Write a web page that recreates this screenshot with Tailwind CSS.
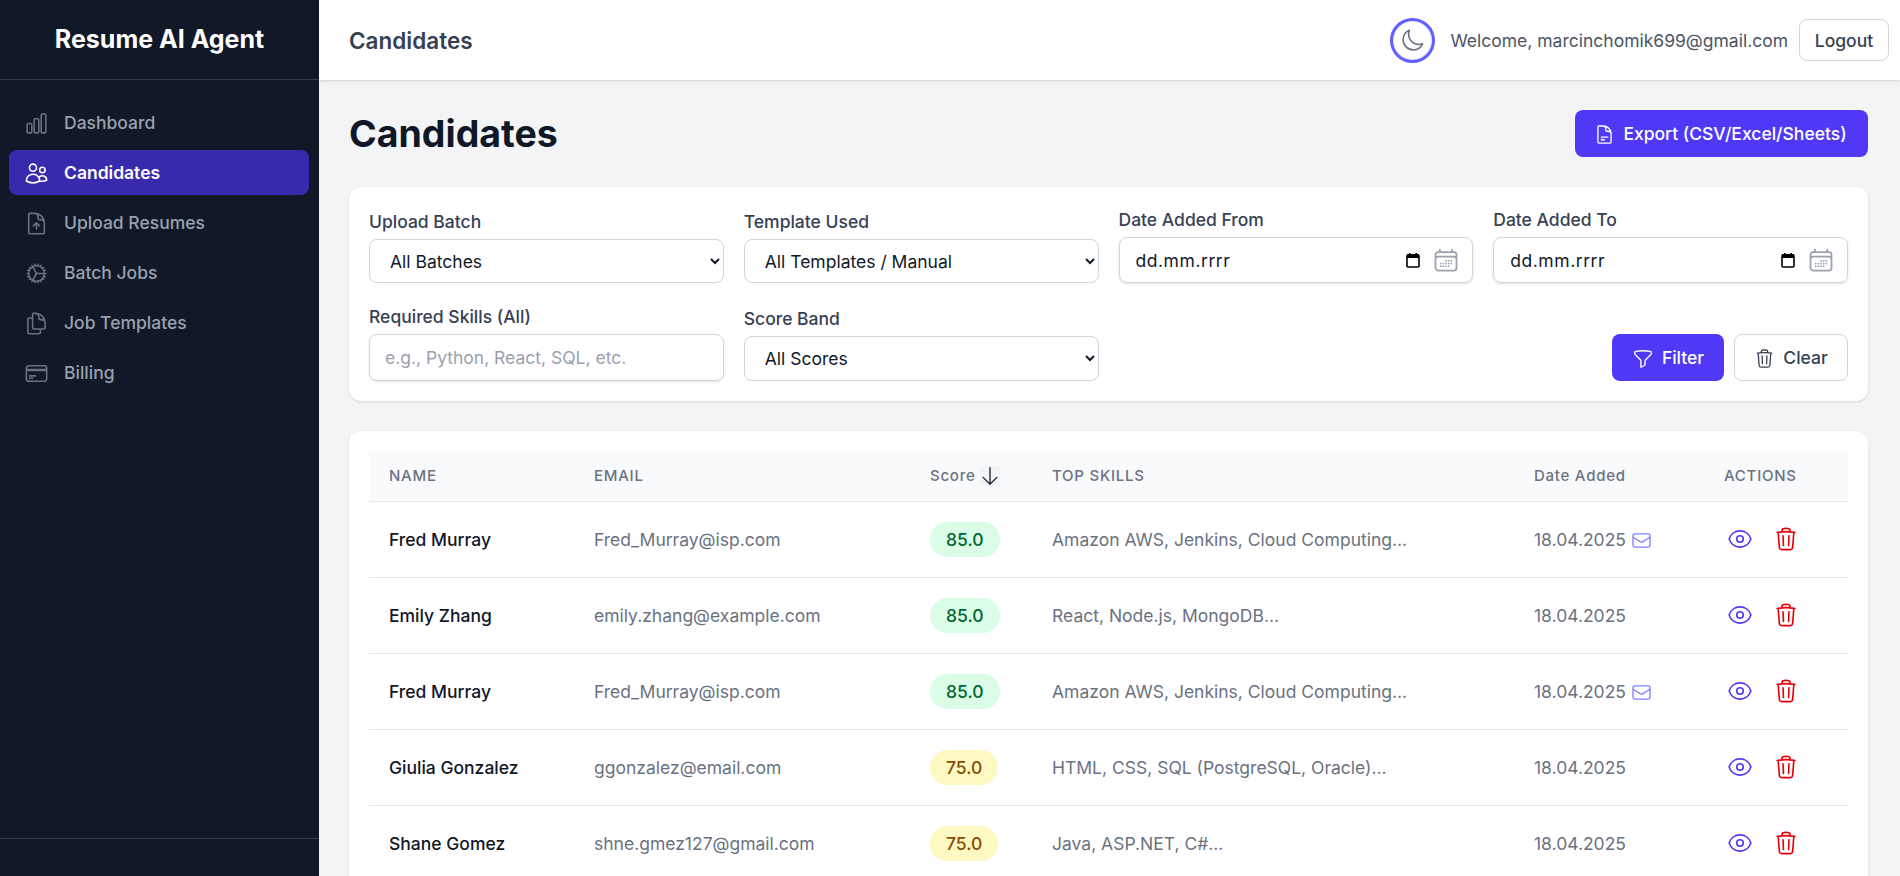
<!DOCTYPE html>
<html lang="en">
<head>
  <meta charset="UTF-8" />
  <title>Candidates</title>
  <script src="https://cdn.jsdelivr.net/npm/@tailwindcss/browser@4"></script>
</head>
<body class="h-screen overflow-hidden flex bg-gray-100 font-[Inter,sans-serif]">
  <!-- sidebar -->
  <aside class="w-[319px] shrink-0 h-full bg-[#111827] flex flex-col">
    <div class="h-[80px] shrink-0 flex items-center justify-center border-b border-gray-700">
      <span class="text-[25px] font-bold text-white">Resume AI Agent</span>
    </div>
    <nav class="flex-1 pl-[9px] pr-[10px] pt-[20px] flex flex-col gap-[5px]">
      <a class="h-[45px] pt-[2px] flex items-center gap-[15px] pl-[15px] rounded-lg text-[17.5px] font-medium text-gray-400">
        <svg class="w-[25px] h-[25px] text-gray-500" fill="none" viewBox="0 0 24 24" stroke-width="1.5" stroke="currentColor"><path stroke-linecap="round" stroke-linejoin="round" d="M3 13.125C3 12.504 3.504 12 4.125 12h2.25c.621 0 1.125.504 1.125 1.125v6.75C7.5 20.496 6.996 21 6.375 21h-2.25A1.125 1.125 0 0 1 3 19.875v-6.75ZM9.75 8.625c0-.621.504-1.125 1.125-1.125h2.25c.621 0 1.125.504 1.125 1.125v11.25c0 .621-.504 1.125-1.125 1.125h-2.25a1.125 1.125 0 0 1-1.125-1.125V8.625ZM16.5 4.125c0-.621.504-1.125 1.125-1.125h2.25C20.496 3 21 3.504 21 4.125v15.75c0 .621-.504 1.125-1.125 1.125h-2.25a1.125 1.125 0 0 1-1.125-1.125V4.125Z"/></svg>
        Dashboard
      </a>
      <a class="h-[45px] pt-[2px] flex items-center gap-[15px] pl-[15px] rounded-lg text-[17.5px] font-semibold text-white bg-indigo-800">
        <svg class="w-[25px] h-[25px] text-white" fill="none" viewBox="0 0 24 24" stroke-width="1.5" stroke="currentColor"><path stroke-linecap="round" stroke-linejoin="round" d="M15 19.128a9.38 9.38 0 0 0 2.625.372 9.337 9.337 0 0 0 4.121-.952 4.125 4.125 0 0 0-7.533-2.493M15 19.128v-.003c0-1.113-.285-2.16-.786-3.07M15 19.128v.106A12.318 12.318 0 0 1 8.624 21c-2.331 0-4.512-.645-6.374-1.766l-.001-.109a6.375 6.375 0 0 1 11.964-3.07M12 6.375a3.375 3.375 0 1 1-6.75 0 3.375 3.375 0 0 1 6.75 0Zm8.25 2.25a2.625 2.625 0 1 1-5.25 0 2.625 2.625 0 0 1 5.25 0Z"/></svg>
        Candidates
      </a>
      <a class="h-[45px] pt-[2px] flex items-center gap-[15px] pl-[15px] rounded-lg text-[17.5px] font-medium text-gray-400">
        <svg class="w-[25px] h-[25px] text-gray-500" fill="none" viewBox="0 0 24 24" stroke-width="1.5" stroke="currentColor"><path stroke-linecap="round" stroke-linejoin="round" d="M19.5 14.25v-2.625a3.375 3.375 0 0 0-3.375-3.375h-1.5A1.125 1.125 0 0 1 13.5 7.125v-1.5a3.375 3.375 0 0 0-3.375-3.375H8.25m6.75 12-3-3m0 0-3 3m3-3v6m-1.5-15H5.625c-.621 0-1.125.504-1.125 1.125v17.25c0 .621.504 1.125 1.125 1.125h12.75c.621 0 1.125-.504 1.125-1.125V11.25a9 9 0 0 0-9-9Z"/></svg>
        Upload Resumes
      </a>
      <a class="h-[45px] pt-[2px] flex items-center gap-[15px] pl-[15px] rounded-lg text-[17.5px] font-medium text-gray-400">
        <svg class="w-[25px] h-[25px] text-gray-500" fill="none" viewBox="0 0 24 24" stroke-width="1.5" stroke="currentColor"><path stroke-linecap="round" stroke-linejoin="round" d="M4.5 12a7.5 7.5 0 0 0 15 0m-15 0a7.5 7.5 0 1 1 15 0m-15 0H3m16.5 0H21m-1.5 0H12m-8.457 3.077 1.41-.513m14.095-5.13 1.41-.513M5.106 17.785l1.15-.964m11.49-9.642 1.149-.964M7.501 19.795l.75-1.3m7.5-12.99.75-1.3m-6.063 16.658.26-1.477m2.605-14.772.26-1.477m0 17.726-.26-1.477M10.698 4.614l-.26-1.477M16.5 19.794l-.75-1.299M7.5 4.205 12 12m6.894 5.785-1.149-.964M6.256 7.178l-1.15-.964m15.352 8.864-1.41-.513M4.954 9.435l-1.41-.514M12.002 12l-3.75 6.495"/></svg>
        Batch Jobs
      </a>
      <a class="h-[45px] pt-[2px] flex items-center gap-[15px] pl-[15px] rounded-lg text-[17.5px] font-medium text-gray-400">
        <svg class="w-[25px] h-[25px] text-gray-500" fill="none" viewBox="0 0 24 24" stroke-width="1.5" stroke="currentColor"><path stroke-linecap="round" stroke-linejoin="round" d="M15.75 17.25v3.375c0 .621-.504 1.125-1.125 1.125h-9.75a1.125 1.125 0 0 1-1.125-1.125V7.875c0-.621.504-1.125 1.125-1.125H6.75a9.06 9.06 0 0 1 1.5.124m7.5 10.376h3.375c.621 0 1.125-.504 1.125-1.125V11.25c0-4.46-3.243-8.161-7.5-8.876a9.06 9.06 0 0 0-1.5-.124H9.375c-.621 0-1.125.504-1.125 1.125v3.5m7.5 10.375H9.375a1.125 1.125 0 0 1-1.125-1.125v-9.25m12 6.625v-1.875a3.375 3.375 0 0 0-3.375-3.375h-1.5a1.125 1.125 0 0 1-1.125-1.125v-1.5a3.375 3.375 0 0 0-3.375-3.375H9.75"/></svg>
        Job Templates
      </a>
      <a class="h-[45px] pt-[2px] flex items-center gap-[15px] pl-[15px] rounded-lg text-[17.5px] font-medium text-gray-400">
        <svg class="w-[25px] h-[25px] text-gray-500" fill="none" viewBox="0 0 24 24" stroke-width="1.5" stroke="currentColor"><path stroke-linecap="round" stroke-linejoin="round" d="M2.25 8.25h19.5M2.25 9h19.5m-16.5 5.25h6m-6 2.25h3m-3.75 3h15a2.25 2.25 0 0 0 2.25-2.25V6.75A2.25 2.25 0 0 0 19.5 4.5h-15a2.25 2.25 0 0 0-2.25 2.25v10.5A2.25 2.25 0 0 0 4.5 19.5Z"/></svg>
        Billing
      </a>
    </nav>
    <div class="h-[38px] shrink-0 border-t border-gray-700"></div>
  </aside>

  <div class="flex-1 min-w-0 flex flex-col h-full">
    <!-- header -->
    <header class="h-[80px] shrink-0 bg-white shadow flex items-center justify-between pl-[30px] pr-[11px] relative">
      <h2 class="text-[22.5px] pt-[2px] font-semibold text-gray-700">Candidates</h2>
      <div class="flex items-center">
        <button class="w-[45px] h-[45px] rounded-full border-[3px] border-indigo-500 ring-1 ring-inset ring-indigo-100 flex items-center justify-center text-gray-500 mr-[15px]">
          <svg class="w-[25px] h-[25px]" fill="none" viewBox="0 0 24 24" stroke-width="1.5" stroke="currentColor"><path stroke-linecap="round" stroke-linejoin="round" d="M21.752 15.002A9.72 9.72 0 0 1 18 15.75c-5.385 0-9.75-4.365-9.75-9.75 0-1.33.266-2.597.748-3.752A9.753 9.753 0 0 0 3 11.25C3 16.635 7.365 21 12.75 21a9.753 9.753 0 0 0 9.002-5.998Z"/></svg>
        </button>
        <span class="text-[17.5px] pt-[2px] text-gray-600 mr-[11px]">Welcome, marcinchomik699@gmail.com</span>
        <button class="w-[90px] h-[42px] pt-[2px] rounded-lg border border-gray-300 bg-white text-[17.5px] font-medium text-gray-700">Logout</button>
      </div>
    </header>

    <main class="flex-1 min-h-0 overflow-hidden pl-[30px] pr-[32px]">
      <div class="h-[107px] flex items-center justify-between">
        <h1 class="text-[37.5px] pt-[2px] font-bold text-gray-900">Candidates</h1>
        <button class="w-[293px] h-[47px] pt-[2px] pr-[2px] rounded-lg bg-indigo-600 text-white text-[17.5px] font-medium flex items-center justify-center gap-2">
          <svg class="w-[21px] h-[21px]" fill="none" viewBox="0 0 24 24" stroke-width="1.5" stroke="currentColor"><path stroke-linecap="round" stroke-linejoin="round" d="M19.5 14.25v-2.625a3.375 3.375 0 0 0-3.375-3.375h-1.5A1.125 1.125 0 0 1 13.5 7.125v-1.5a3.375 3.375 0 0 0-3.375-3.375H8.25m0 12.75h7.5m-7.5 3H12M10.5 2.25H5.625c-.621 0-1.125.504-1.125 1.125v17.25c0 .621.504 1.125 1.125 1.125h12.75c.621 0 1.125-.504 1.125-1.125V11.25a9 9 0 0 0-9-9Z"/></svg>
          Export (CSV/Excel/Sheets)
        </button>
      </div>

      <!-- filters -->
      <section class="h-[214px] bg-white rounded-xl shadow p-5 grid grid-cols-4 gap-x-5 gap-y-5 grid-rows-[76px_78px] items-end">
        <div>
          <label class="block text-[17.5px] font-medium text-gray-700 mb-[5px] leading-6">Upload Batch</label>
          <select class="w-full h-[44px] rounded-lg border border-gray-300 bg-white pl-[16px] text-[17.5px] text-gray-900"><option>All Batches</option></select>
        </div>
        <div>
          <label class="block text-[17.5px] font-medium text-gray-700 mb-[5px] leading-6">Template Used</label>
          <select class="w-full h-[44px] rounded-lg border border-gray-300 bg-white pl-[16px] text-[17.5px] text-gray-900"><option>All Templates / Manual</option></select>
        </div>
        <div>
          <label class="block text-[17.5px] font-medium text-gray-700 mb-[5px] leading-6">Date Added From</label>
          <div class="h-[46px] rounded-lg border border-gray-300 shadow-sm flex items-center pl-4 pr-[12px] text-[17.5px] tracking-[0.55px] text-gray-900">
            <span class="flex-1 pt-[2px]">dd.mm.rrrr</span>
            <svg class="w-4 h-4 mr-[11px]" viewBox="0 0 16 16"><rect x="2" y="3" width="12" height="12" rx="1" fill="none" stroke="#000" stroke-width="1.6"/><rect x="2" y="2" width="12" height="4" fill="#000"/><rect x="4" y="1" width="1.5" height="2" fill="#000"/><rect x="10.5" y="1" width="1.5" height="2" fill="#000"/></svg>
            <svg class="w-7 h-7 text-gray-400" fill="none" viewBox="0 0 24 24" stroke-width="1.5" stroke="currentColor"><path stroke-linecap="round" stroke-linejoin="round" d="M6.75 3v2.25M17.25 3v2.25M3 18.75V7.5a2.25 2.25 0 0 1 2.25-2.25h13.5A2.25 2.25 0 0 1 21 7.5v11.25m-18 0A2.25 2.25 0 0 0 5.25 21h13.5A2.25 2.25 0 0 0 21 18.75m-18 0v-7.5A2.25 2.25 0 0 1 5.25 9h13.5A2.25 2.25 0 0 1 21 11.25v7.5m-9-6h.008v.008H12v-.008ZM12 15h.008v.008H12V15Zm0 2.25h.008v.008H12v-.008ZM9.75 15h.008v.008H9.75V15Zm0 2.25h.008v.008H9.75v-.008ZM7.5 15h.008v.008H7.5V15Zm0 2.25h.008v.008H7.5v-.008Zm6.75-4.5h.008v.008h-.008v-.008Zm0 2.25h.008v.008h-.008V15Zm0 2.25h.008v.008h-.008v-.008Zm2.25-4.5h.008v.008H16.5v-.008Zm0 2.25h.008v.008H16.5V15Z"/></svg>
          </div>
        </div>
        <div>
          <label class="block text-[17.5px] font-medium text-gray-700 mb-[5px] leading-6">Date Added To</label>
          <div class="h-[46px] rounded-lg border border-gray-300 shadow-sm flex items-center pl-4 pr-[12px] text-[17.5px] tracking-[0.55px] text-gray-900">
            <span class="flex-1 pt-[2px]">dd.mm.rrrr</span>
            <svg class="w-4 h-4 mr-[11px]" viewBox="0 0 16 16"><rect x="2" y="3" width="12" height="12" rx="1" fill="none" stroke="#000" stroke-width="1.6"/><rect x="2" y="2" width="12" height="4" fill="#000"/><rect x="4" y="1" width="1.5" height="2" fill="#000"/><rect x="10.5" y="1" width="1.5" height="2" fill="#000"/></svg>
            <svg class="w-7 h-7 text-gray-400" fill="none" viewBox="0 0 24 24" stroke-width="1.5" stroke="currentColor"><path stroke-linecap="round" stroke-linejoin="round" d="M6.75 3v2.25M17.25 3v2.25M3 18.75V7.5a2.25 2.25 0 0 1 2.25-2.25h13.5A2.25 2.25 0 0 1 21 7.5v11.25m-18 0A2.25 2.25 0 0 0 5.25 21h13.5A2.25 2.25 0 0 0 21 18.75m-18 0v-7.5A2.25 2.25 0 0 1 5.25 9h13.5A2.25 2.25 0 0 1 21 11.25v7.5m-9-6h.008v.008H12v-.008ZM12 15h.008v.008H12V15Zm0 2.25h.008v.008H12v-.008ZM9.75 15h.008v.008H9.75V15Zm0 2.25h.008v.008H9.75v-.008ZM7.5 15h.008v.008H7.5V15Zm0 2.25h.008v.008H7.5v-.008Zm6.75-4.5h.008v.008h-.008v-.008Zm0 2.25h.008v.008h-.008V15Zm0 2.25h.008v.008h-.008v-.008Zm2.25-4.5h.008v.008H16.5v-.008Zm0 2.25h.008v.008H16.5V15Z"/></svg>
          </div>
        </div>
        <div>
          <label class="block text-[17.5px] font-medium text-gray-700 mb-[5px] leading-6">Required Skills (All)</label>
          <input type="text" placeholder="e.g., Python, React, SQL, etc." class="w-full h-[47px] rounded-lg border border-gray-300 shadow-sm pl-[15px] pr-4 text-[17.5px] placeholder:text-gray-400" />
        </div>
        <div>
          <label class="block text-[17.5px] font-medium text-gray-700 mb-[5px] leading-6">Score Band</label>
          <select class="w-full h-[45px] rounded-lg border border-gray-300 bg-white pl-[16px] text-[17.5px] text-gray-900"><option>All Scores</option></select>
        </div>
        <div class="col-span-2 flex justify-end gap-[10px]">
          <button class="w-[112px] h-[47px] pt-[2px] rounded-lg bg-indigo-600 text-white text-[17.5px] font-medium flex items-center justify-center gap-2">
            <svg class="w-[22px] h-[22px]" fill="none" viewBox="0 0 24 24" stroke-width="1.5" stroke="currentColor"><path stroke-linecap="round" stroke-linejoin="round" d="M12 3c2.755 0 5.455.232 8.083.678.533.09.917.556.917 1.096v1.044a2.25 2.25 0 0 1-.659 1.591l-5.432 5.432a2.25 2.25 0 0 0-.659 1.591v2.927a2.25 2.25 0 0 1-1.244 2.013L9.75 21v-6.568a2.25 2.25 0 0 0-.659-1.591L3.659 7.409A2.25 2.25 0 0 1 3 5.818V4.774c0-.54.384-1.006.917-1.096A48.32 48.32 0 0 1 12 3Z"/></svg>
            Filter
          </button>
          <button class="w-[114px] h-[47px] pt-[2px] rounded-lg border border-gray-300 bg-white text-gray-700 text-[17.5px] font-medium flex items-center justify-center gap-2">
            <svg class="w-[21px] h-[21px]" fill="none" viewBox="0 0 24 24" stroke-width="1.5" stroke="currentColor"><path stroke-linecap="round" stroke-linejoin="round" d="m14.74 9-.346 9m-4.788 0L9.26 9m9.968-3.21c.342.052.682.107 1.022.166m-1.022-.165L18.16 19.673a2.25 2.25 0 0 1-2.244 2.077H8.084a2.25 2.25 0 0 1-2.244-2.077L4.772 5.79m14.456 0a48.108 48.108 0 0 0-3.478-.397m-12 .562c.34-.059.68-.114 1.022-.165m0 0a48.11 48.11 0 0 1 3.478-.397m7.5 0v-.916c0-1.18-.91-2.164-2.09-2.201a51.964 51.964 0 0 0-3.32 0c-1.18.037-2.09 1.022-2.09 2.201v.916m7.5 0a48.667 48.667 0 0 0-7.5 0"/></svg>
            Clear
          </button>
        </div>
      </section>

      <!-- table -->
      <section class="mt-[30px] bg-white rounded-xl shadow p-5">
        <table class="w-full table-fixed">
          <colgroup>
            <col class="w-[205px]" /><col class="w-[336px]" /><col class="w-[122px]" /><col class="w-[482px]" /><col class="w-[190px]" /><col class="w-[144px]" />
          </colgroup>
          <thead class="bg-gray-50 border-b border-gray-200">
            <tr class="h-[50px] text-left text-[15px] text-gray-500 tracking-wider">
              <th class="px-5 font-medium uppercase">Name</th>
              <th class="px-5 font-medium uppercase">Email</th>
              <th class="px-5 font-medium">
                <span class="flex items-center gap-[5px]">Score
                  <span class="w-5 h-5 rounded bg-gray-100 flex items-center justify-center text-gray-800">
                    <svg class="w-[22px] h-[22px] shrink-0" fill="none" viewBox="0 0 24 24" stroke-width="1.5" stroke="currentColor"><path stroke-linecap="round" stroke-linejoin="round" d="M19.5 13.5 12 21m0 0-7.5-7.5M12 21V3"/></svg>
                  </span>
                </span>
              </th>
              <th class="px-5 font-medium uppercase">Top Skills</th>
              <th class="px-5 font-medium">Date Added</th>
              <th class="px-5 font-medium uppercase">Actions</th>
            </tr>
          </thead>
          <tbody id="rows"></tbody>
        </table>
      </section>
    </main>
  </div>

  <script>
    const candidates = [
      { name: 'Fred Murray', email: 'Fred_Murray@isp.com', score: '85.0', skills: 'Amazon AWS, Jenkins, Cloud Computing...', mail: true },
      { name: 'Emily Zhang', email: 'emily.zhang@example.com', score: '85.0', skills: 'React, Node.js, MongoDB...', mail: false },
      { name: 'Fred Murray', email: 'Fred_Murray@isp.com', score: '85.0', skills: 'Amazon AWS, Jenkins, Cloud Computing...', mail: true },
      { name: 'Giulia Gonzalez', email: 'ggonzalez@email.com', score: '75.0', skills: 'HTML, CSS, SQL (PostgreSQL, Oracle)...', mail: false },
      { name: 'Shane Gomez', email: 'shne.gmez127@gmail.com', score: '75.0', skills: 'Java, ASP.NET, C#...', mail: false }
    ];

    const mailIcon = `<svg class="w-[21px] h-[21px] text-indigo-500/80" fill="none" viewBox="0 0 24 24" stroke-width="1.5" stroke="currentColor"><path stroke-linecap="round" stroke-linejoin="round" d="M21.75 6.75v10.5a2.25 2.25 0 0 1-2.25 2.25h-15a2.25 2.25 0 0 1-2.25-2.25V6.75m19.5 0A2.25 2.25 0 0 0 19.5 4.5h-15a2.25 2.25 0 0 0-2.25 2.25m19.5 0v.243a2.25 2.25 0 0 1-1.07 1.916l-7.5 4.615a2.25 2.25 0 0 1-2.36 0L3.32 8.91a2.25 2.25 0 0 1-1.07-1.916V6.75"/></svg>`;

    document.getElementById('rows').innerHTML = candidates.map(c => {
      const badge = c.score === '85.0' ? 'bg-green-100 text-green-800' : 'bg-yellow-100 text-yellow-800';
      return `
        <tr class="h-[76px] border-b border-gray-200 text-[17.5px]">
          <td class="px-5 pt-[2px] font-medium text-gray-900">${c.name}</td>
          <td class="px-5 pt-[2px] text-gray-500">${c.email}</td>
          <td class="px-5"><span class="inline-block h-[35px] leading-[36px] px-4 rounded-full font-medium ${badge}">${c.score}</span></td>
          <td class="px-5 pt-[2px] text-gray-500">${c.skills}</td>
          <td class="px-5 pt-[2px] text-gray-500"><span class="flex items-center gap-[5px]">18.04.2025 ${c.mail ? mailIcon : ''}</span></td>
          <td class="px-5">
            <span class="flex items-center gap-[20px] pl-[3px]">
              <svg class="w-[26px] h-[26px] text-indigo-600" fill="none" viewBox="0 0 24 24" stroke-width="1.5" stroke="currentColor"><path stroke-linecap="round" stroke-linejoin="round" d="M2.036 12.322a1.012 1.012 0 0 1 0-.639C3.423 7.51 7.36 4.5 12 4.5c4.638 0 8.573 3.007 9.963 7.178.07.207.07.431 0 .639C20.577 16.49 16.64 19.5 12 19.5c-4.638 0-8.573-3.007-9.963-7.178Z"/><path stroke-linecap="round" stroke-linejoin="round" d="M15 12a3 3 0 1 1-6 0 3 3 0 0 1 6 0Z"/></svg>
              <svg class="w-[26px] h-[26px] text-red-600" fill="none" viewBox="0 0 24 24" stroke-width="1.5" stroke="currentColor"><path stroke-linecap="round" stroke-linejoin="round" d="m14.74 9-.346 9m-4.788 0L9.26 9m9.968-3.21c.342.052.682.107 1.022.166m-1.022-.165L18.16 19.673a2.25 2.25 0 0 1-2.244 2.077H8.084a2.25 2.25 0 0 1-2.244-2.077L4.772 5.79m14.456 0a48.108 48.108 0 0 0-3.478-.397m-12 .562c.34-.059.68-.114 1.022-.165m0 0a48.11 48.11 0 0 1 3.478-.397m7.5 0v-.916c0-1.18-.91-2.164-2.09-2.201a51.964 51.964 0 0 0-3.32 0c-1.18.037-2.09 1.022-2.09 2.201v.916m7.5 0a48.667 48.667 0 0 0-7.5 0"/></svg>
            </span>
          </td>
        </tr>`;
    }).join('');
  </script>
</body>
</html>
